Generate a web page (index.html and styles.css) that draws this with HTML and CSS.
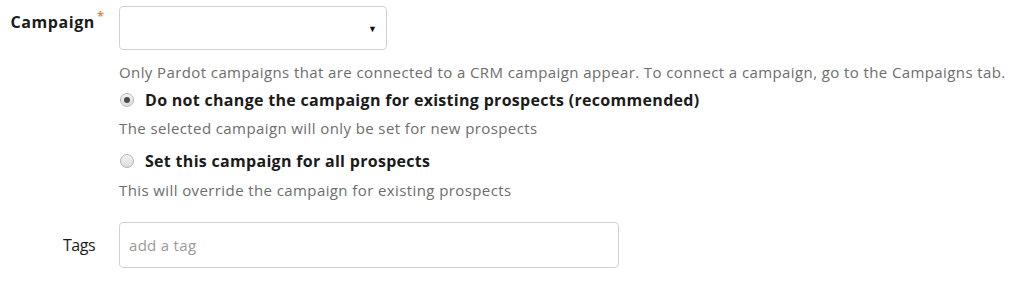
FILE: index.html
```html
<!DOCTYPE html>
<html>
<head>
<meta charset="utf-8">
<link rel="stylesheet" href="styles.css">
</head>
<body>
<form class="form">
  <div class="row row-campaign">
    <label class="label label-campaign">Campaign<span class="req">*</span></label>
    <div class="field">
      <div class="select"><span class="caret">&#9660;</span></div>
      <p class="help help-first">Only Pardot campaigns that are connected to a CRM campaign appear. To connect a campaign, go to the Campaigns tab.</p>
      <div class="option">
        <span class="radio checked"></span>
        <span class="option-text">Do not change the campaign for existing prospects (recommended)</span>
      </div>
      <p class="help help-opt">The selected campaign will only be set for new prospects</p>
      <div class="option option-second">
        <span class="radio"></span>
        <span class="option-text">Set this campaign for all prospects</span>
      </div>
      <p class="help help-opt2">This will override the campaign for existing prospects</p>
    </div>
  </div>
  <div class="row row-tags">
    <label class="label label-tags">Tags</label>
    <div class="field">
      <div class="input"><span class="placeholder">add a tag</span></div>
    </div>
  </div>
</form>
</body>
</html>
```

FILE: styles.css
```css
html, body {
  margin: 0;
  padding: 0;
  background: #ffffff;
}
body {
  font-family: "Open Sans", "Liberation Sans", sans-serif;
  color: #1b1b1b;
}
.form {
  padding-top: 6px;
}
.row {
  display: grid;
  grid-template-columns: 95px 1fr;
  column-gap: 24px;
}
.label {
  text-align: right;
  font-size: 16px;
  line-height: 20px;
  color: #1b1b1b;
}
.label-campaign {
  font-weight: 700;
  padding-top: 6px;
  position: relative;
  letter-spacing: 0.6px;
}
.req {
  position: absolute;
  right: -9px;
  top: 0px;
  font-size: 13px;
  color: #f08a24;
  font-weight: 700;
  letter-spacing: 0;
}
.label-tags {
  padding-top: 13px;
  letter-spacing: -0.5px;
}
.field {
  display: flex;
  flex-direction: column;
  align-items: flex-start;
}
.select {
  width: 257px;
  height: 42px;
  border: 1px solid #d2d2d2;
  border-radius: 4px;
  display: flex;
  align-items: center;
  justify-content: flex-end;
  padding-right: 9px;
}
.caret {
  font-size: 9px;
  color: #111;
  line-height: 1;
}
.help {
  margin: 0;
  font-size: 15px;
  line-height: 20px;
  letter-spacing: 0.4px;
  color: #6d6d6d;
}
.help-first {
  margin-top: 12px;
}
.option {
  display: flex;
  align-items: center;
  gap: 11px;
  margin-top: 8px;
}
.option-second {
  margin-top: 13px;
}
.option-text {
  font-size: 16px;
  line-height: 20px;
  font-weight: 700;
  letter-spacing: 0.3px;
  color: #1b1b1b;
}
.radio {
  width: 12px;
  height: 12px;
  border-radius: 50%;
  border: 1px solid #b5b5b5;
  background: linear-gradient(#f4f4f4, #dcdcdc);
  display: flex;
  align-items: center;
  justify-content: center;
  margin-left: 1px;
}
.radio.checked::after {
  content: "";
  width: 6px;
  height: 6px;
  border-radius: 50%;
  background: #4a4a4a;
}
.help-opt {
  margin-top: 8px;
}
.help-opt2 {
  margin-top: 9px;
}
.row-tags {
  margin-top: 22px;
}
.input {
  width: 489px;
  height: 44px;
  border: 1px solid #d2d2d2;
  border-radius: 4px;
  display: flex;
  align-items: center;
  padding-left: 9px;
}
.placeholder {
  font-size: 15px;
  color: #9a9a9a;
  letter-spacing: 0.3px;
}
```
